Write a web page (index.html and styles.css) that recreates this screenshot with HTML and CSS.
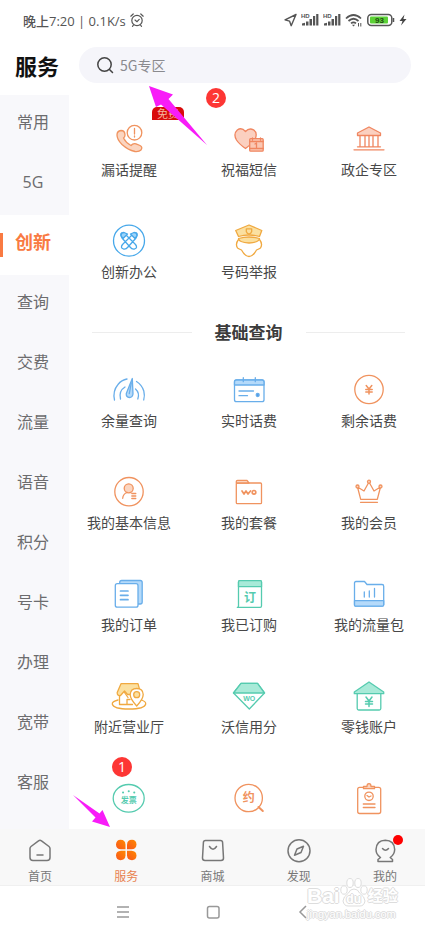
FILE: index.html
```html
<!DOCTYPE html>
<html lang="zh-CN">
<head>
<meta charset="utf-8">
<meta name="viewport" content="width=device-width, initial-scale=1">
<title>服务</title>
<link rel="stylesheet" href="styles.css">
</head>
<body>
<div class="status">
  <div class="status-left">
    <span>晚上7:20 | 0.1K/s</span>
    <svg width="14" height="14" viewBox="0 0 14 14" fill="none" stroke="#555" stroke-width="1.2" stroke-linecap="round"><circle cx="7" cy="7.500" r="5.200"/><path d="M.8 3.200 3.200 1M13.200 3.200 10.800 1M5 7l2 1.600L9.200 6.400M3.500 12l-1 1.300M10.500 12l1 1.300"/></svg>
  </div>
  <div class="status-right">
    <svg width="13" height="14" viewBox="0 0 13 14" fill="none" stroke="#555" stroke-width="1.400" stroke-linejoin="round"><path d="M12 1.500 1 6.800l4.600 1.400 1.600 4.500z"/></svg>
    <svg width="18" height="14" viewBox="0 0 18 14"><text x="0" y="5" class="hd">HD</text><path d="M1 12.500V10.500l3-.8v2.800zM5 12.500V8.500h2.500v4zM8.500 12.500V6H11v6.500zM12 12.500V3h2.200v9.500zM15.200 12.500V1h2.200v11.500z" fill="#555"/></svg>
    <svg width="18" height="14" viewBox="0 0 18 14"><text x="0" y="5" class="hd">HD</text><path d="M1 12.500V10.500l3-.8v2.800zM5 12.500V8.500h2.500v4zM8.500 12.500V6H11v6.500zM12 12.500V3h2.200v9.500zM15.200 12.500V1h2.200v11.500z" fill="#555"/></svg>
    <svg width="18" height="14" viewBox="0 0 18 14" fill="none" stroke="#555" stroke-width="1.700"><path d="M1 5.500Q8.500-1.500 16 5.500M3.500 8Q8.500 3.500 13.500 8M6 10.300Q8.500 8.300 11 10.300"/><path d="M7 11.800h3l-1.500 1.700z" fill="#555" stroke="none"/><path d="M13.500 10v3.500M15.800 10v3.500" stroke-width="1"/></svg>
    <svg width="28" height="14" viewBox="0 0 28 14"><rect x=".8" y="1.500" width="24" height="11" rx="3.500" fill="#fff" stroke="#555" stroke-width="1.500"/><rect x="3" y="3.500" width="18" height="7" rx="1" fill="#5bd136"/><path d="M26.500 5v4" stroke="#555" stroke-width="1.500"/><text x="12.500" y="10.300" class="level">93</text></svg>
    <svg width="8" height="14" viewBox="0 0 8 14" fill="#444"><path d="M5.500 1.500.5 8h3L2 12.500 7.500 6H4.400z"/></svg>
  </div>
</div>

<header class="header">
  <h1>服务</h1>
  <label class="search">
    <svg width="18" height="18" viewBox="0 0 18 18" fill="none" stroke="#444" stroke-width="1.500" stroke-linecap="round"><circle cx="8.500" cy="8.500" r="6.700"/><path d="m13.500 13.500 3 3"/></svg>
    <input type="search" placeholder="5G专区" aria-label="搜索">
  </label>
</header>

<div class="body">
  <nav class="side">
    <a href="#">常用</a>
    <a href="#">5G</a>
    <a href="#" class="active">创新</a>
    <a href="#">查询</a>
    <a href="#">交费</a>
    <a href="#">流量</a>
    <a href="#">语音</a>
    <a href="#">积分</a>
    <a href="#">号卡</a>
    <a href="#">办理</a>
    <a href="#">宽带</a>
    <a href="#">客服</a>
  </nav>

  <main class="content">
    <div class="grid">
      <button class="item orange">
        <span class="badge">免费</span>
        <svg viewBox="0 0 40 40"><path class="tint" d="M8 16Q8 12 12 11.500 16 11.500 16 16 16 18 14.500 19 17 24 22 26.500 24 24 27 24.800L31 26.500Q34 28 32 31 30 33 26 32.500 19 31 13 25.500 8 20.500 8 16Z"/><circle cx="25.500" cy="13.700" r="7.300" fill="#fff"/><path d="M25.500 9.500v5.500M25.500 17v1"/></svg>
        漏话提醒
      </button>
      <button class="item red">
        <svg viewBox="0 0 40 40"><path class="tint" d="M16.500 12.500Q12.500 8 8.300 11 4 15 7.500 21 10 25 16.500 29.500 23 25 26 20.500 29 14 24.500 10.800 20 8.500 16.500 12.500Z"/><rect x="20.700" y="19.700" width="13.500" height="12.500" rx="1" fill="#fbc7b3"/><path d="M20.700 22.500h13.500M20.700 29.500h13.500M26 25l1.500-1v4.500M23.500 19v2M31.500 19v2"/></svg>
        祝福短信
      </button>
      <button class="item red">
        <svg viewBox="0 0 40 40"><path class="tint" d="M20 8 31.500 14v2.500h-23V14z"/><path d="M11 17v10.500M16 17v10.500M20 17v10.500M24 17v10.500M29 17v10.500M8.500 27.800h23M5 30.800h30"/></svg>
        政企专区
      </button>
      <button class="item sky">
        <svg viewBox="0 0 40 40"><circle cx="20" cy="19.700" r="15.500"/><path d="M15 12 26.500 23.500Q29 27 25.500 28 23 28.500 21 26L13 17Q11 13.500 12.500 12M25 12 13.500 23.500Q11 27 14.500 28 17 28.500 19 26L27 17Q29 13.500 27.500 12"/><path class="tint" d="M12 14.500Q12 11.500 15 11.500L18.500 13 14 17.500zM28 14.500Q28 11.500 25 11.500L21.500 13 26 17.500z"/></svg>
        创新办公
      </button>
      <button class="item gold">
        <svg viewBox="0 0 40 40"><path d="M9.500 18.500Q6 23 8.500 27 10 28 12.500 29 16 35.500 20 35.500 24 35.500 27.500 29 30 28 31.500 27 34 23 30.500 18.500"/><path class="tint" d="M20 4 32.800 9.500 30.500 15.500Q20 12.500 9.500 15.500L6.700 9.500zM9.500 17.500Q20 14.500 30.500 17.500 30 21.500 20 22 10 21.500 9.500 17.500Z"/><path d="M17.300 7.800H22.700V10.500Q22 12.500 20 13.200 18 12.500 17.300 10.500Z"/></svg>
        号码举报
      </button>
    </div>

    <h2 class="divider"><span>基础查询</span></h2>

    <div class="grid">
      <button class="item blue">
        <svg viewBox="0 0 40 40"><path d="M5.500 30Q3.500 21 9 14.500 12.500 10 18 9M27.500 11.500Q33 15 34.800 21 36 25.500 34.700 30M11.500 29Q9.500 21 16 17M26.500 19Q31 23 28.800 29"/><path class="tint" d="M23.300 8.500 24 24Q23.500 27.500 20.500 27.500 16.800 27 17.300 23.500Z"/><path d="m22.300 13-2 10.500"/></svg>
        余量查询
      </button>
      <button class="item blue">
        <svg viewBox="0 0 40 40"><rect x="5.500" y="10" width="29.500" height="21.700" rx="2"/><path class="tint" d="M5.500 15V12q0-2 2-2H33q2 0 2 2v3zM14.300 7.700v4M26.300 7.700v4"/><path d="M10 21h14.500M10 25.700h8.500"/><circle cx="28.700" cy="25" r="1.500" fill="#4d96e8"/></svg>
        实时话费
      </button>
      <button class="item orange">
        <svg viewBox="0 0 40 40"><circle cx="20" cy="19.500" r="14.200"/><path d="m17.200 15.500 2.800 3.500 2.800-3.500M20 19v5M16.800 19.500h6.400M16.800 22h6.400" stroke-width="1.500"/></svg>
        剩余话费
      </button>
      <button class="item orange">
        <svg viewBox="0 0 40 40"><circle cx="20" cy="19.700" r="14.200"/><circle class="tint" cx="19.700" cy="16.300" r="4.500"/><path d="M13.700 26.300Q14 22 18 20.500M22.800 21.500h4M22.800 24h4M22.800 26.500h4"/></svg>
        我的基本信息
      </button>
      <button class="item orange">
        <svg viewBox="0 0 40 40"><rect x="7.300" y="11" width="25.200" height="20.700" rx="1"/><path class="tint" d="M7.300 11V9.500q0-1.200 1.200-1.200h9.500l2 2.700z"/><path d="m13 19 2 3 2-3 2 3 2.500-3" stroke-width="1.700"/><circle cx="25" cy="20.300" r="1.800" stroke-width="1.700"/></svg>
        我的套餐
      </button>
      <button class="item orange">
        <svg viewBox="0 0 40 40"><path d="m8.500 15 3.200 12.300h16.600L31.500 15 25 19 20 10 15 19zM11.500 30.300h17"/><circle class="tint" cx="20" cy="9.700" r="1.500"/><circle class="tint" cx="8.500" cy="14.500" r="1.500"/><circle class="tint" cx="31.500" cy="14.500" r="1.500"/></svg>
        我的会员
      </button>
      <button class="item blue">
        <svg viewBox="0 0 40 40"><rect class="tint" x="10.700" y="6.500" width="22.500" height="23.500" rx="2"/><rect x="6.300" y="9.700" width="22.700" height="23.500" rx="2" fill="#fff"/><path d="M11.500 17h7.500M11.500 21.300h7.500M11.500 25.700h7.500" stroke-width="1.700"/></svg>
        我的订单
      </button>
      <button class="item green">
        <svg viewBox="0 0 40 40"><path d="M9.500 8q0-1.300 1.300-1.300h20.400q1.300 0 1.300 1.300v24q0 1.300-1.300 1.300H8.300q1.200 0 1.200-1.300z"/><path class="tint" d="M9.500 12.700V8q0-1.300 1.300-1.300h20.400q1.300 0 1.300 1.300v4.700z"/><text x="21" y="27.500" class="t12">订</text></svg>
        我已订购
      </button>
      <button class="item blue">
        <svg viewBox="0 0 40 40"><path d="M5.500 9q0-1.500 1.500-1.500h8.500l2.500 3h15q1.700 0 1.700 1.700v18.500q0 1.500-1.500 1.500H7q-1.500 0-1.500-1.500z"/><path class="tint" d="M5.500 26.700h29.200v4q0 1.500-1.500 1.500H7q-1.500 0-1.500-1.500z"/><path d="M15.300 18v5M20.300 17v6M25.500 14.500V23"/></svg>
        我的流量包
      </button>
      <button class="item gold">
        <svg viewBox="0 0 40 40"><path d="M9 24Q3 25.500 3.300 28 4.500 33 20 33 35.500 33 36.700 28 37 25.500 32.500 24"/><path class="tint" d="M12 7.700h17l1.500 5.500V18.500h-12L15.500 15l-4 4.500Q8 20 8.200 16.500z"/><path d="M10.500 20v8.500h13M15.500 16.500l3.500 5M18 28v-4.500h3"/><path d="M27.700 30Q21.200 23 21.200 18.500 21.500 12.500 27.700 12.500 34 12.500 34.200 18.500 34.200 23 27.700 30Z" fill="#fff"/><circle class="tint" cx="27.700" cy="18.700" r="3"/></svg>
        附近营业厅
      </button>
      <button class="item green">
        <svg viewBox="0 0 40 40"><path d="M12 7.300h16.500L35.500 17 20.300 33 4.500 17z"/><path class="tint" d="M12 7.300h16.500L35.500 17h-31z"/><text x="20.300" y="24.500" class="wo">WO</text></svg>
        沃信用分
      </button>
      <button class="item green">
        <svg viewBox="0 0 40 40"><path d="M8.200 17.700v14.800q0 1.500 1.500 1.500h20.600q1.500 0 1.500-1.500V17.700"/><path class="tint" d="M20 6 34.700 16v1.700H5.300V16z"/><path d="m17 21 3 4 3-4M20 25v5.500M16.500 25.500h7M16.500 28h7" stroke-width="1.500"/></svg>
        零钱账户
      </button>
      <button class="item green">
        <svg viewBox="0 0 40 40"><ellipse cx="19.700" cy="20.300" rx="15.500" ry="13.800"/><text x="19.700" y="24.700" class="t8">发票</text><path d="M14 14.500h.1M19.700 13.200h.1M25.200 14.500h.1" stroke-width="2"/></svg>
      </button>
      <button class="item orange">
        <svg viewBox="0 0 40 40"><circle cx="19.700" cy="20" r="13.700"/><path d="m29.500 29 4.300 4" stroke-width="2"/><text x="19.700" y="24.300" class="t12">约</text></svg>
      </button>
      <button class="item orange" aria-label="业务记录">
        <svg viewBox="0 0 40 40"><rect x="8.700" y="9.300" width="23" height="26.200" rx="2"/><path class="tint" d="M14.500 10.700V8.500H18Q18 5.700 20 5.700 22 5.700 22 8.500h3.500v2.200z"/><circle cx="20" cy="18.300" r="4.200"/><path d="m18 17.500 2 1.500 2-1M14.300 26h11.700M14.300 29.500h11.700"/></svg>
      </button>
    </div>
  </main>
</div>

<nav class="tabs">
  <div class="tabs-row">
    <a href="#"><span class="tab-icon"><svg viewBox="0 0 28 28"><path d="M12.500 3.800q1.500-1 3 0l7.500 5.700q1 .8 1 2v9q0 3-3 3H7q-3 0-3-3v-9q0-1.200 1-2zM11 18h6"/></svg></span>首页</a>
    <a href="#" class="active"><span class="tab-icon"><svg viewBox="0 0 28 28"><defs><linearGradient id="petal" x1="0" y1="1" x2="1" y2="0"><stop offset="0" stop-color="#f9551b"/><stop offset="1" stop-color="#ff8a00"/></linearGradient></defs><g fill="url(#petal)" stroke="none"><path d="M13.500 12.300H9Q4 12 4 7.500 4.300 3 8.500 2.800 13.300 3 13.500 7.500z"/><path d="M15 12.300h4.500Q24.300 12 24.500 7.500 24.300 3 20 2.800 15.200 3 15 7.500z"/><path d="M13.500 13.700H9Q4 14 4 18.500 4.300 23 8.500 23.200 13.300 23 13.500 18.500z"/><path d="M15 13.700h4.500Q24.300 14 24.500 18.500 24.300 23 20 23.200 15.200 23 15 18.500z"/></g></svg></span>服务</a>
    <a href="#"><span class="tab-icon"><svg viewBox="0 0 28 28"><path d="M6.500 3.500h15q2 0 2.100 2l.9 15.500q0 2.500-2.500 2.500H6q-2.500 0-2.500-2.500L4.400 5.500q.1-2 2.100-2zM10.500 9.500q3.500 5.500 7 0"/></svg></span>商城</a>
    <a href="#"><span class="tab-icon"><svg viewBox="0 0 28 28"><circle cx="14" cy="13.700" r="11"/><path d="M18.500 9.200 16 15.500 9.500 18.200 12 12z"/></svg></span>发现</a>
    <a href="#"><span class="tab-icon"><svg viewBox="0 0 28 28"><path d="M9.500 20.500Q5 17.500 5 12.500 5.500 3.500 14.300 3.300 23.300 3.500 23.700 12.500 23.500 17.500 19.200 20.500L21.500 22.500V24.500H7V22.500ZM11.500 11.500q3 3.500 6 0"/></svg><i class="dot"></i></span>我的</a>
  </div>
</nav>

<div class="system">
  <button aria-label="菜单"><svg width="18" height="18" viewBox="0 0 18 18"><path d="M3 4h12M3 9h12M3 14h12"/></svg></button>
  <button aria-label="主屏幕"><svg width="18" height="18" viewBox="0 0 18 18"><rect x="3.500" y="3.500" width="11.500" height="11.500" rx="2"/></svg></button>
  <button aria-label="返回"><svg width="18" height="18" viewBox="0 0 18 18"><path d="M12 3 6 9l6 6"/></svg></button>
</div>

<svg class="arrow arrow-search" viewBox="0 0 58 59"><path d="M0 0 24 8.500 19.500 13 58 59 12 18.500 7 21z"/></svg>
<span class="step step-search">2</span>
<svg class="arrow arrow-tab" viewBox="0 0 37 32"><path d="M37 32 29.500 15 26.500 18.500 0 0 22.500 22.500 19 26.500z"/></svg>
<span class="step step-tab">1</span>

<div class="watermark">
  <div class="mark-top"><span>Bai</span><span class="paw"><svg viewBox="0 0 28 30"><ellipse cx="4" cy="12" rx="3.200" ry="4.200"/><ellipse cx="10" cy="5" rx="3.200" ry="4.500"/><ellipse cx="18" cy="5" rx="3.200" ry="4.500"/><ellipse cx="24" cy="12" rx="3.200" ry="4.200"/><path d="M14 11Q18 11 19.500 15 25 19 25 23 24 28 20 28H8Q4 28 3 23 3 19 8.500 15 10 11 14 11Z"/></svg><b>du</b></span><span class="cn">经验</span></div>
  <div class="mark-url">jingyan.baidu.com</div>
</div>
</body>
</html>
```
FILE: styles.css
```css
* {
  box-sizing: border-box;
}

body {
  position: relative;
  display: flex;
  flex-direction: column;
  height: 100vh;
  margin: 0;
  overflow: hidden;
  background: #fff;
  color: #484848;
  font-family: "Noto Sans CJK SC", sans-serif;
}

a {
  color: inherit;
  text-decoration: none;
}

button {
  padding: 0;
  border: 0;
  background: none;
  color: inherit;
  font: inherit;
}

/* Status bar */
.status {
  display: flex;
  flex: none;
  align-items: center;
  justify-content: space-between;
  height: 38px;
  padding: 2px 18px 0 23px;
  color: #555;
  font-family: "Open Sans", "Noto Sans CJK SC", sans-serif;
  font-size: 13px;
  font-weight: 500;
}

.status-left,
.status-right {
  display: flex;
  align-items: center;
  gap: 4px;
}

.hd {
  fill: #555;
  font: bold 6px "Liberation Sans", sans-serif;
}

.level {
  fill: #1f4d10;
  font: bold 8px "Liberation Sans", sans-serif;
  text-anchor: middle;
}

/* Header */
.header {
  display: flex;
  flex: none;
  align-items: center;
  gap: 20px;
  padding: 9px 14px 12px 15px;
}

h1 {
  margin: 0;
  color: #111;
  font-size: 22px;
  font-weight: 700;
  line-height: 36px;
}

.search {
  display: flex;
  flex: 1;
  align-items: center;
  gap: 6px;
  height: 36px;
  padding: 0 17px;
  border-radius: 18px;
  background: #f5f5fa;
}

.search input {
  flex: 1;
  min-width: 0;
  padding: 0;
  border: 0;
  outline: 0;
  background: none;
  color: #444;
  font: 14px "Noto Sans CJK SC", sans-serif;
}

.search input::placeholder {
  color: #8a8a8e;
}

/* Body */
.body {
  display: flex;
  flex: 1;
  min-height: 0;
  overflow: hidden;
}

.side {
  flex: none;
  width: 69px;
  background: #f8f8fb;
  color: #6c6c6e;
  font-family: "Open Sans", "Noto Sans CJK SC", sans-serif;
  font-size: 16px;
  text-align: center;
}

.side a {
  display: block;
  height: 60px;
  padding-right: 3px;
  line-height: 54px;
}

.side .active {
  background: linear-gradient(#f97a42, #f97a42) 0 18px / 3px 24px no-repeat #fff;
  color: #f97a42;
  font-size: 18px;
  font-weight: 700;
}

.content {
  flex: 1;
  min-width: 0;
  padding-top: 24px;
}

.grid {
  display: grid;
  grid-template-columns: repeat(3, 1fr);
  row-gap: 42px;
  margin-right: -4px;
}

.item {
  position: relative;
  display: flex;
  flex-direction: column;
  align-items: center;
  color: #484848;
  font-size: 14px;
  line-height: 20px;
  white-space: nowrap;
}

.item svg {
  width: 40px;
  height: 40px;
  fill: none;
  stroke: var(--line);
  stroke-width: 1.3;
  stroke-linecap: round;
  stroke-linejoin: round;
}

.item .tint {
  fill: var(--tint);
}

.item text {
  fill: var(--line);
  stroke: none;
  text-anchor: middle;
}

.t12 {
  font-size: 12px;
  font-weight: 700;
}

.t8 {
  font-size: 8px;
  font-weight: 700;
}

.wo {
  font: bold 7px "Liberation Sans", sans-serif;
}

.orange { --line: #f0935f; --tint: #fbd5c0; }
.red { --line: #f08660; --tint: #fbd0c0; }
.sky { --line: #47a8ea; --tint: #9dd4fa; }
.blue { --line: #69aeea; --tint: #b5dafa; }
.gold { --line: #f0a940; --tint: #fbe0a0; }
.green { --line: #55cbaf; --tint: #a8ead8; }

.badge {
  position: absolute;
  top: -12px;
  left: 83px;
  width: 32px;
  height: 13px;
  border-radius: 5px 5px 0 0;
  background: #d90b0b;
  color: #f3b49c;
  font-size: 11px;
  line-height: 12px;
}

.divider {
  display: flex;
  align-items: center;
  gap: 23px;
  margin: 41px 20px 28px 23px;
  color: #3c3c3c;
  font-size: 17px;
  font-weight: 700;
  line-height: 20px;
}

.divider::before,
.divider::after {
  flex: 1;
  height: 1px;
  background: #ededed;
  content: "";
}

/* Tab bar */
.tabs {
  flex: none;
  overflow: hidden;
  border-bottom: 1px solid #f0f0f0;
  background: #f8f8f8;
}

.tabs-row {
  display: flex;
  margin: 0 -3px;
}

.tabs a {
  display: flex;
  flex: 1;
  flex-direction: column;
  align-items: center;
  gap: 2px;
  padding-top: 8px;
  color: #777;
  font-size: 12px;
  line-height: 18px;
}

.tabs .active {
  color: #e88250;
}

.tab-icon {
  position: relative;
  width: 28px;
  height: 28px;
}

.tab-icon svg {
  display: block;
  fill: none;
  stroke: #777;
  stroke-width: 1.5;
  stroke-linecap: round;
  stroke-linejoin: round;
}

.dot {
  position: absolute;
  top: -2px;
  right: -4px;
  width: 10px;
  height: 10px;
  border-radius: 50%;
  background: #fe0000;
}

/* System navigation */
.system {
  display: flex;
  flex: none;
  justify-content: center;
  height: 46px;
  padding-top: 6px;
}

.system button {
  display: flex;
  align-items: center;
  justify-content: center;
  width: 90px;
}

.system svg {
  fill: none;
  stroke: #999;
  stroke-width: 1.5;
}

/* Annotations */
.arrow {
  position: absolute;
  fill: #f81cf8;
}

.arrow-search {
  top: 86px;
  left: 149px;
  width: 58px;
}

.arrow-tab {
  top: 795px;
  left: 73px;
  width: 37px;
}

.step {
  position: absolute;
  width: 20px;
  height: 20px;
  border-radius: 50%;
  background: #fd3634;
  color: #fff;
  font: 14px/20px "Open Sans", sans-serif;
  text-align: center;
}

.step-search {
  top: 88px;
  left: 206px;
}

.step-tab {
  top: 757px;
  left: 112px;
}

/* Watermark */
.watermark {
  position: absolute;
  top: 878px;
  left: 307px;
  color: #fff;
  font-family: "Liberation Sans", "Noto Sans CJK SC", sans-serif;
  text-shadow: 1px 0 #ddd, -1px 0 #ddd, 0 1px #ddd, 0 -1px #ddd;
  pointer-events: none;
}

.mark-top {
  display: flex;
  align-items: flex-end;
  height: 30px;
  font-size: 21px;
  font-weight: 700;
  line-height: 24px;
}

.paw {
  position: relative;
  width: 28px;
  height: 30px;
}

.paw svg {
  display: block;
  fill: #fff;
  stroke: #ddd;
}

.paw b {
  position: absolute;
  inset: 14px 0 auto;
  font-size: 12px;
  line-height: 14px;
  text-align: center;
}

.cn {
  font-size: 15px;
}

.mark-url {
  font-size: 11px;
  line-height: 12px;
}
```
